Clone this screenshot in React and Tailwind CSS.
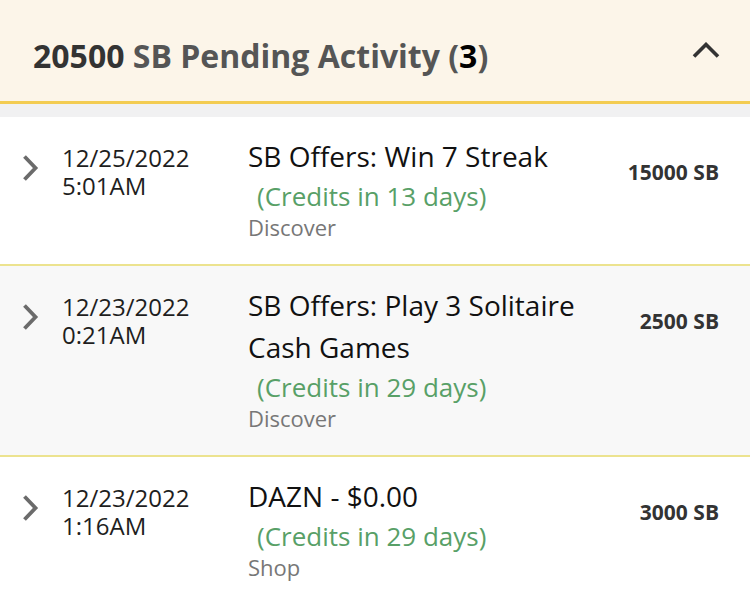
import { useState } from "react";

const activities = [
  {
    date: "12/25/2022",
    time: "5:01AM",
    title: "SB Offers: Win 7 Streak",
    credits: "(Credits in 13 days)",
    source: "Discover",
    amount: "15000 SB",
  },
  {
    date: "12/23/2022",
    time: "0:21AM",
    title: "SB Offers: Play 3 Solitaire Cash Games",
    credits: "(Credits in 29 days)",
    source: "Discover",
    amount: "2500 SB",
  },
  {
    date: "12/23/2022",
    time: "1:16AM",
    title: "DAZN - $0.00",
    credits: "(Credits in 29 days)",
    source: "Shop",
    amount: "3000 SB",
  },
];

function ChevronRight() {
  return (
    <svg width="18" height="28" viewBox="0 0 18 28" fill="none" className="text-[#6b6b6b]">
      <path d="M3.5 2.5 L14.5 14 L3.5 25.5" stroke="currentColor" strokeWidth="3.8" />
    </svg>
  );
}

function ChevronUp() {
  return (
    <svg width="28" height="16" viewBox="0 0 28 16" fill="none" className="text-[#333]">
      <path d="M2 14.5 L14 2.5 L26 14.5" stroke="currentColor" strokeWidth="3.6" />
    </svg>
  );
}

function ActivityRow({ item, shaded, last }) {
  return (
    <div
      className={
        "flex pt-[18px] pb-[24px] " +
        (shaded ? "bg-[#f8f8f8] " : "bg-white ") +
        (last ? "border-b border-[#a9a9a9]" : "border-b-2 border-[#ece38f]")
      }
    >
      <div className="w-[62px] shrink-0 pl-[21px] pt-[19px]">
        <ChevronRight />
      </div>
      <div className="w-[186px] shrink-0 pt-[9px] text-[24px] leading-[28px] text-[#1e1e1e]">
        <div>{item.date}</div>
        <div>{item.time}</div>
      </div>
      <div className="w-[360px] shrink-0">
        <div className="text-[28px] leading-[42px] text-[#111]">{item.title}</div>
        <div className="mt-[1px] pl-[9px] text-[26px] leading-[36px] text-[#58a067]">{item.credits}</div>
        <div className="text-[22px] leading-[26px] text-[#777]">{item.source}</div>
      </div>
      <div className="flex-1 pr-[31px] pt-[23px] text-right text-[21px] leading-[28px] font-bold text-[#333]">
        {item.amount}
      </div>
    </div>
  );
}

export default function App() {
  const [open, setOpen] = useState(true);

  return (
    <main className="w-[750px] min-h-[602px] bg-white font-['Open_Sans',sans-serif]">
      <button
        onClick={() => setOpen(!open)}
        className="flex h-[104px] w-full items-start justify-between border-b-[3px] border-[#f3cc52] bg-[#fcf5e9] pl-[33px] pr-[30px] pt-[36px] text-left"
      >
        <h2 className="text-[32px] leading-[40px] font-bold text-[#555]">
          <span className="text-[#333]">20500</span> SB Pending Activity (
          <span className="text-black">3</span>)
        </h2>
        <span className="pt-[6px]">
          <ChevronUp />
        </span>
      </button>
      {open && (
        <div>
          <div className="h-[13px] bg-[#f1f1f2]" />
          {activities.map((item, i) => (
            <ActivityRow key={i} item={item} shaded={i === 1} last={i === activities.length - 1} />
          ))}
        </div>
      )}
    </main>
  );
}
